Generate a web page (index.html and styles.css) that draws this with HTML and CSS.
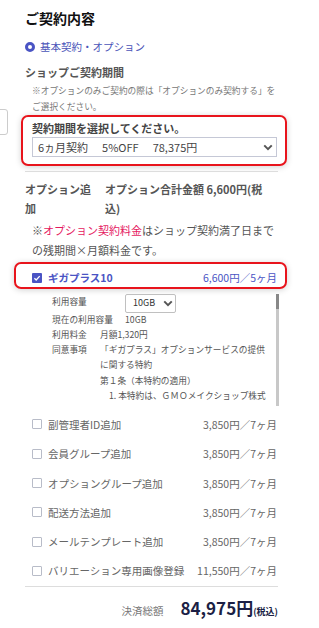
FILE: index.html
```html
<!DOCTYPE html>
<html lang="ja">
  <head>
    <meta charset="UTF-8" />
    <meta name="viewport" content="width=device-width, initial-scale=1.0" />
    <title>ご契約内容</title>
    <link rel="stylesheet" href="styles.css">
  </head>

  <body>
    <div class="side-box"></div>
    <div id="contract">
      <h2 class="title">ご契約内容</h2>
      <div class="plan-radio"><span class="radio"></span>基本契約・オプション</div>

      <h3 class="section-head">ショップご契約期間</h3>
      <p class="small-note">※オプションのみご契約の際は「オプションのみ契約する」をご選択ください。</p>

      <div class="highlight period-box">
        <div class="period-label">契約期間を選択してください。</div>
        <div class="period-select">
          <span>6ヵ月契約</span>
          <span>5%OFF</span>
          <span>78,375円</span>
          <svg class="chevron" width="10" height="7" viewBox="0 0 12 8">
            <path d="M1.5 1.5 L6 6 L10.5 1.5" fill="none" stroke="#555" stroke-width="2.4" />
          </svg>
        </div>
      </div>

      <hr class="divider" />

      <div class="option-head">
        <div>オプション追加</div>
        <div>オプション合計金額 6,600円(税込)</div>
      </div>
      <p class="option-note">※<span class="pink">オプション契約料金</span>はショップ契約満了日までの残期間×月額料金です。</p>

      <div class="highlight giga-box">
        <div class="option-row giga">
          <span class="checkbox checked">
            <svg width="10" height="10" viewBox="0 0 10 10">
              <path d="M2.4 5.2 L4.2 7 L7.7 3.1" fill="none" stroke="#fff" stroke-width="1.3" />
            </svg>
          </span>
          <span class="name">ギガプラス10</span>
          <span class="price">6,600円／5ヶ月</span>
        </div>
      </div>

      <div class="giga-detail">
        <div class="detail-body">
          <div class="detail-row first">
            <span class="label">利用容量</span>
            <div class="size-select">
              10GB
              <svg class="chevron" width="10" height="7" viewBox="0 0 12 8">
                <path d="M1.5 1.5 L6 6 L10.5 1.5" fill="none" stroke="#555" stroke-width="2.4" />
              </svg>
            </div>
          </div>
          <div class="detail-row second">
            <span class="label">現在の利用容量</span>
            <span>10GB</span>
          </div>
          <div class="detail-row narrow">
            <span class="label">利用料金</span>
            <span>月額1,320円</span>
          </div>
          <div class="detail-row narrow">
            <span class="label">同意事項</span>
            <div class="agreement">
              <div>「ギガプラス」オプションサービスの提供に関する特約</div>
              <div>第１条（本特約の適用）</div>
              <div class="clause-item">1. 本特約は、ＧＭＯメイクショップ株式</div>
            </div>
          </div>
        </div>
        <div class="scrollbar"><div class="thumb"></div></div>
      </div>

      <ul class="option-list">
        <li class="option-row"><span class="checkbox"></span><span class="name">副管理者ID追加</span><span class="price">3,850円／7ヶ月</span></li>
        <li class="option-row"><span class="checkbox"></span><span class="name">会員グループ追加</span><span class="price">3,850円／7ヶ月</span></li>
        <li class="option-row"><span class="checkbox"></span><span class="name">オプショングループ追加</span><span class="price">3,850円／7ヶ月</span></li>
        <li class="option-row"><span class="checkbox"></span><span class="name">配送方法追加</span><span class="price">3,850円／7ヶ月</span></li>
        <li class="option-row"><span class="checkbox"></span><span class="name">メールテンプレート追加</span><span class="price">3,850円／7ヶ月</span></li>
        <li class="option-row"><span class="checkbox"></span><span class="name">バリエーション専用画像登録</span><span class="price">11,550円／7ヶ月</span></li>
      </ul>

      <div class="total">
        <span class="total-label">決済総額</span>
        <span class="total-amount">84,975円</span>
        <span class="tax">(税込)</span>
      </div>
    </div>
  </body>
</html>
```

FILE: styles.css
```css
body {
  margin: 0;
  background: #fff;
  color: #555;
  font-family: "Noto Sans CJK JP", "Noto Sans", sans-serif;
}

.side-box {
  position: absolute;
  left: -20px;
  top: 109px;
  width: 26px;
  height: 24px;
  border: 1px solid #ccc;
  border-radius: 3px;
  background: #fff;
}

#contract {
  width: 253px;
  padding: 8px 41px 20px 25px;
}

.title {
  margin: 0;
  font-size: 14px;
  line-height: 20px;
  font-weight: 700;
  color: #111;
}

.plan-radio {
  margin-top: 11px;
  display: flex;
  align-items: center;
  gap: 5px;
  font-size: 10.5px;
  line-height: 16px;
  color: #4a54b8;
}

.radio {
  width: 4px;
  height: 4px;
  border: 3.5px solid #4a54c4;
  border-radius: 50%;
  background: #fff;
}

.section-head {
  margin: 8px 0 0;
  font-size: 11px;
  line-height: 18px;
  font-weight: 700;
  color: #555;
}

.small-note {
  margin: 2px 0 0;
  padding-left: 7px;
  font-size: 8.7px;
  line-height: 16px;
  color: #777;
}

.highlight {
  border: 2px solid #e8141c;
  border-radius: 7px;
  box-shadow: 0 1px 6px rgba(0, 0, 0, 0.18);
}

.period-box {
  margin: 0 -9px 0 -4px;
  padding: 3px 8px 7px 9px;
}

.period-label {
  font-size: 11px;
  line-height: 16px;
  font-weight: 700;
  color: #444;
}

.period-select {
  margin-top: 1px;
  height: 18px;
  border: 1px solid #c5c8d6;
  display: flex;
  align-items: center;
  gap: 14px;
  padding: 0 3px 0 5px;
  font-size: 11px;
  color: #444;
}

.chevron {
  margin-left: auto;
}

.divider {
  margin: 5px 0 0;
  height: 0;
  border: 0;
  border-top: 1px solid #ddd;
}

.option-head {
  display: grid;
  grid-template-columns: 72px 168px;
  column-gap: 8px;
  margin-top: 8px;
  font-size: 11px;
  line-height: 19px;
  font-weight: 700;
  color: #555;
}

.option-note {
  margin: 1.5px 0 0;
  padding-left: 7px;
  font-size: 11px;
  line-height: 20px;
  color: #555;
}

.pink {
  color: #e5195f;
}

.giga-box {
  margin: 2px -9px 0 -11px;
  padding: 6px 8px 1px 16px;
}

.option-row {
  display: flex;
  align-items: center;
  font-size: 10.5px;
  line-height: 16px;
}

.option-row .price {
  margin-left: auto;
}

.checkbox {
  box-sizing: border-box;
  width: 10px;
  height: 10px;
  margin-right: 6px;
  border: 1px solid #b8bcc8;
  border-radius: 1px;
  background: #fff;
}

.checkbox.checked {
  border: 0;
  background: #4a54c4;
}

.checkbox svg {
  display: block;
}

.giga {
  color: #4a54c4;
}

.giga .name {
  font-weight: 700;
}

.giga-detail {
  margin: 5px 0 0 25px;
  width: 229px;
  height: 112px;
  display: flex;
}

.detail-body {
  flex: 1;
  overflow: hidden;
  padding-left: 2px;
  font-size: 8.7px;
  color: #555;
}

.detail-row {
  display: flex;
  align-items: flex-start;
  line-height: 15.3px;
}

.detail-row .label {
  width: 73px;
  flex-shrink: 0;
}

.detail-row.narrow .label {
  width: 48px;
}

.detail-row.second {
  margin-top: -1px;
}

.size-select {
  box-sizing: border-box;
  width: 51px;
  height: 19px;
  display: flex;
  align-items: center;
  padding: 0 2px 0 7px;
  border: 1px solid #c0c0c0;
  border-radius: 2px;
  font-size: 9px;
  color: #333;
}

.agreement {
  width: 168px;
}

.clause-item {
  padding-left: 9px;
}

.scrollbar {
  width: 3px;
  background: #c8c8c8;
}

.thumb {
  height: 15px;
  background: #888;
}

.option-list {
  list-style: none;
  margin: 4.35px 0 0;
  padding: 0;
}

.option-list li {
  padding: 7.15px 1px 7.15px 7px;
  line-height: 15px;
  color: #666;
}

.total {
  border-top: 1px solid #ddd;
  padding-top: 9px;
  display: flex;
  justify-content: flex-end;
  align-items: baseline;
  line-height: 24px;
}

.total-label {
  margin-right: 17px;
  font-size: 10.5px;
  color: #777;
}

.total-amount {
  font-size: 17px;
  font-weight: 700;
  color: #1b1f45;
}

.tax {
  font-size: 9px;
  font-weight: 700;
  color: #1b1f45;
}
```
